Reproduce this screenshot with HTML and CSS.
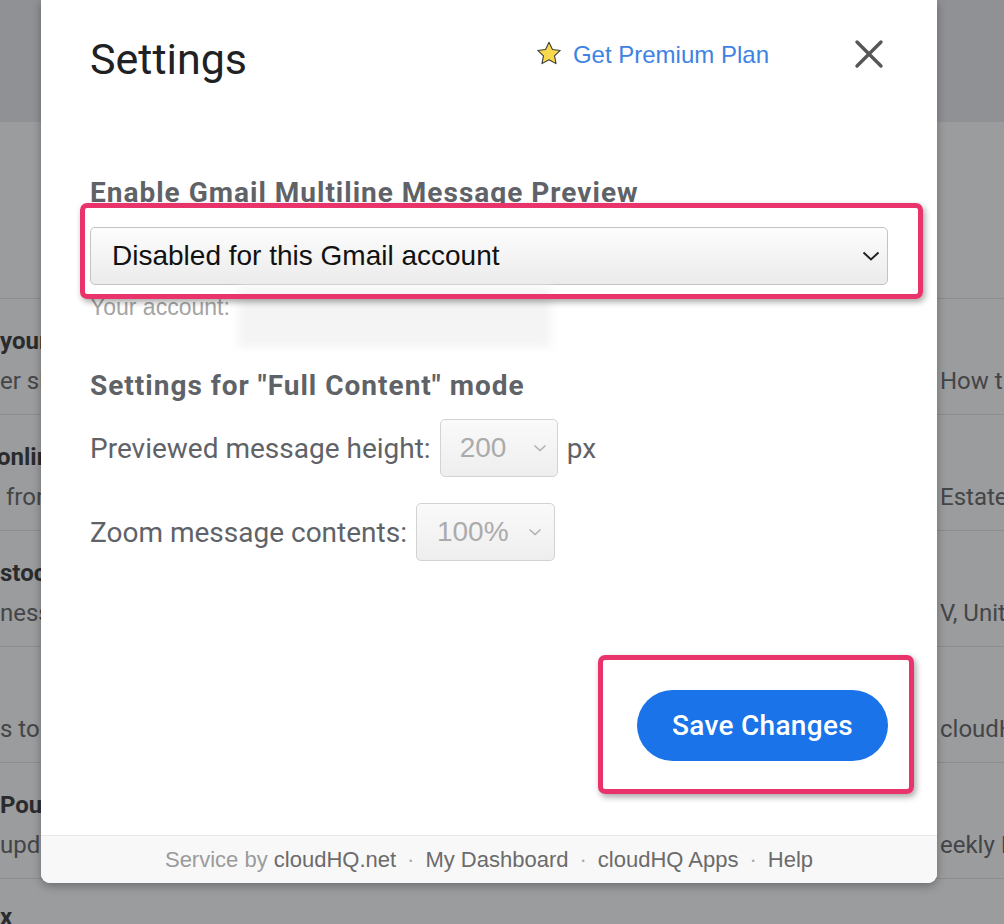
FILE: index.html
```html
<!DOCTYPE html>
<html lang="en">
<head>
    <meta charset="UTF-8">
    <title>Settings</title>
    <link rel="stylesheet" href="styles.css">
</head>
<body>

<!-- Gmail list behind the dialog (dimmed) -->
<div class="inbox">
    <div class="toolbar"></div>
    <div class="spacer"></div>
    <div class="mail-row">
        <div class="mail-left"><div class="sender">your</div><div class="snippet">er sl</div></div>
        <div class="mail-right">How t</div>
    </div>
    <div class="mail-row">
        <div class="mail-left"><div class="sender shift">onlin</div><div class="snippet">&nbsp;from</div></div>
        <div class="mail-right">Estate</div>
    </div>
    <div class="mail-row">
        <div class="mail-left"><div class="sender">stock</div><div class="snippet">ness</div></div>
        <div class="mail-right">V, Unit</div>
    </div>
    <div class="mail-row">
        <div class="mail-left"><div class="sender">&nbsp;</div><div class="snippet">s to</div></div>
        <div class="mail-right">cloudH</div>
    </div>
    <div class="mail-row">
        <div class="mail-left"><div class="sender">Pour</div><div class="snippet">upda</div></div>
        <div class="mail-right">eekly I</div>
    </div>
    <div class="mail-row last-row">
        <div class="mail-left"><div class="sender">x</div></div>
    </div>
</div>

<!-- Settings dialog -->
<div class="modal">
    <div class="modal-body">
        <div class="modal-head">
            <h1 class="modal-title">Settings</h1>
            <a class="premium-link" href="#">
                <svg class="star" width="26" height="26" viewBox="0 0 24 24">
                    <path d="M12 1.2l3.2 6.6 7.2.9-5.3 5 1.4 7.2L12 17.4l-6.5 3.5 1.4-7.2-5.3-5 7.2-.9z" fill="#f9d94c" stroke="#3a3a3a" stroke-width="1" stroke-linejoin="round"/>
                </svg>
                Get Premium Plan
            </a>
            <span class="close-button">
                <svg width="30" height="30" viewBox="0 0 30 30">
                    <path d="M3 3L27 27M27 3L3 27" stroke="#575757" stroke-width="3.4" stroke-linecap="round"/>
                </svg>
            </span>
        </div>

        <h2 class="section-title first">Enable Gmail Multiline Message Preview</h2>
        <div class="select select-main">
            <span>Disabled for this Gmail account</span>
            <svg class="chevron" width="18" height="10" viewBox="0 0 18 10">
                <path d="M1.5 1.5L9 8.5L16.5 1.5" fill="none" stroke="#222" stroke-width="2"/>
            </svg>
        </div>
        <div class="account-row">
            <span class="account-label">Your account:</span>
            <span class="account-blur"></span>
        </div>

        <h2 class="section-title">Settings for "Full Content" mode</h2>
        <div class="option-row">
            <span class="option-label">Previewed message height:</span>
            <div class="select select-small height-select">
                <span>200</span>
                <svg class="chevron" width="14" height="8" viewBox="0 0 14 8">
                    <path d="M1.5 1.5L7 6.5L12.5 1.5" fill="none" stroke="#b0b0b0" stroke-width="1.5"/>
                </svg>
            </div>
            <span class="option-label unit">px</span>
        </div>
        <div class="option-row second">
            <span class="option-label">Zoom message contents:</span>
            <div class="select select-small zoom-select">
                <span>100%</span>
                <svg class="chevron" width="14" height="8" viewBox="0 0 14 8">
                    <path d="M1.5 1.5L7 6.5L12.5 1.5" fill="none" stroke="#b0b0b0" stroke-width="1.5"/>
                </svg>
            </div>
        </div>

        <div class="actions">
            <button class="save-button">Save Changes</button>
        </div>
    </div>

    <div class="modal-footer">
        <span class="muted">Service by</span>&nbsp;<span>cloudHQ.net</span>
        <span class="dot">·</span><span>My Dashboard</span>
        <span class="dot">·</span><span>cloudHQ Apps</span>
        <span class="dot">·</span><span>Help</span>
    </div>

    <!-- annotation frames -->
    <div class="highlight highlight-select"></div>
    <div class="highlight highlight-save"></div>
</div>

</body>
</html>
```

FILE: styles.css
```css
/* Page */
body {
    margin: 0;
    width: 1004px;
    height: 924px;
    overflow: hidden;
    position: relative;
    background-color: #9b9c9e;
    font-family: Roboto, "Noto Sans", sans-serif;
}

/* Dimmed inbox */
.inbox {
    height: 924px;
    overflow: hidden;
}

.toolbar {
    height: 122px;
    background-color: #8f9194;
}

.spacer {
    height: 176px;
}

.mail-row {
    height: 116px;
    box-sizing: border-box;
    border-top: 1px solid #8c8d8f;
    display: grid;
    grid-template-columns: 940px 1fr;
    white-space: nowrap;
    overflow: hidden;
}

.mail-row.last-row {
    height: 46px;
}

.mail-left {
    padding-top: 28px;
    overflow: hidden;
}

.last-row .mail-left {
    padding-top: 24px;
}

.sender {
    font-size: 24px;
    line-height: 28px;
    font-weight: 700;
    color: #2a2b2d;
}

.sender.shift {
    margin-left: -3px;
}

.snippet {
    margin-top: 12px;
    font-size: 24px;
    line-height: 28px;
    color: #444547;
}

.mail-right {
    padding-top: 68px;
    font-size: 24px;
    line-height: 28px;
    color: #444547;
    overflow: hidden;
}

/* Dialog */
.modal {
    position: absolute;
    left: 41px;
    top: 0;
    width: 896px;
    height: 883px;
    background-color: #ffffff;
    border-radius: 0 0 9px 9px;
    box-shadow: 0 3px 10px rgba(0, 0, 0, 0.3);
    display: flex;
    flex-direction: column;
}

.modal-body {
    flex: 1;
    padding: 34px 49px 0;
}

.modal-head {
    display: flex;
    align-items: flex-start;
}

.modal-title {
    flex: 1;
    margin: 0;
    font-size: 43px;
    line-height: 50px;
    font-weight: 400;
    color: #202124;
}

.premium-link {
    margin-top: 7px;
    display: inline-flex;
    align-items: center;
    gap: 11px;
    font-family: "Liberation Sans", Arial, sans-serif;
    font-size: 24px;
    line-height: 28px;
    color: #3d83e4;
    text-decoration: none;
}

.premium-link .star {
    margin-top: -2px;
}

.close-button {
    margin: 5px 4px 0 85px;
    display: block;
    width: 30px;
    height: 30px;
    cursor: pointer;
}

.close-button svg {
    display: block;
}

.section-title {
    margin: 23px 0 0;
    font-size: 28px;
    line-height: 32px;
    font-weight: 700;
    letter-spacing: 1px;
    color: #5f6368;
}

.section-title.first {
    margin-top: 93px;
}

/* Selects */
.select {
    box-sizing: border-box;
    display: flex;
    align-items: center;
    justify-content: space-between;
    border-radius: 5px;
    font-family: "Liberation Sans", Arial, sans-serif;
    font-size: 28px;
}

.select-main {
    margin-top: 18px;
    height: 58px;
    padding: 0 7px 0 21px;
    border: 1px solid #c3c3c3;
    background: linear-gradient(#fdfdfd, #ebebeb);
    color: #111111;
}

.select-small {
    height: 58px;
    border: 1px solid #d3d3d3;
    background: linear-gradient(#fafafa, #eeeeee);
    color: #ababab;
}

.height-select {
    width: 118px;
    padding: 0 10px 0 19px;
}

.zoom-select {
    width: 139px;
    padding: 0 12px 0 20px;
}

.account-row {
    display: flex;
    align-items: flex-start;
    height: 62px;
}

.account-label {
    margin-top: 9px;
    font-family: "Liberation Sans", Arial, sans-serif;
    font-size: 23px;
    line-height: 26px;
    color: #a4a4a4;
}

.account-blur {
    margin: 2px 0 0 8px;
    width: 313px;
    height: 60px;
    background-color: #f4f4f4;
    filter: blur(5px);
}

.option-row {
    margin-top: 17px;
    display: flex;
    align-items: center;
    gap: 9px;
}

.option-row.second {
    margin-top: 26px;
}

.option-label {
    font-size: 28px;
    color: #5f6368;
}

/* Save button */
.actions {
    margin-top: 129px;
    display: flex;
    justify-content: flex-end;
}

.save-button {
    width: 251px;
    height: 71px;
    border: none;
    border-radius: 36px;
    background-color: #1a73e8;
    color: #ffffff;
    font-family: Roboto, "Noto Sans", sans-serif;
    font-size: 28px;
    font-weight: 500;
    letter-spacing: 0.3px;
    cursor: pointer;
}

/* Footer */
.modal-footer {
    height: 48px;
    box-sizing: border-box;
    border-top: 1px solid #e8e8e8;
    border-radius: 0 0 9px 9px;
    background-color: #f8f8f8;
    display: flex;
    align-items: center;
    justify-content: center;
    font-family: "Liberation Sans", Arial, sans-serif;
    font-size: 22px;
    color: #6b6b6b;
}

.modal-footer .muted {
    color: #9b9b9b;
}

.modal-footer .dot {
    margin: 0 11px;
    color: #a8a8a8;
}

/* Annotation frames */
.highlight {
    position: absolute;
    box-sizing: border-box;
    border: 5px solid #e8336b;
    border-radius: 7px;
    box-shadow: 2px 3px 6px rgba(0, 0, 0, 0.35);
}

.highlight-select {
    left: 39px;
    top: 203px;
    width: 843px;
    height: 96px;
}

.highlight-save {
    left: 557px;
    top: 655px;
    width: 316px;
    height: 139px;
}
```
